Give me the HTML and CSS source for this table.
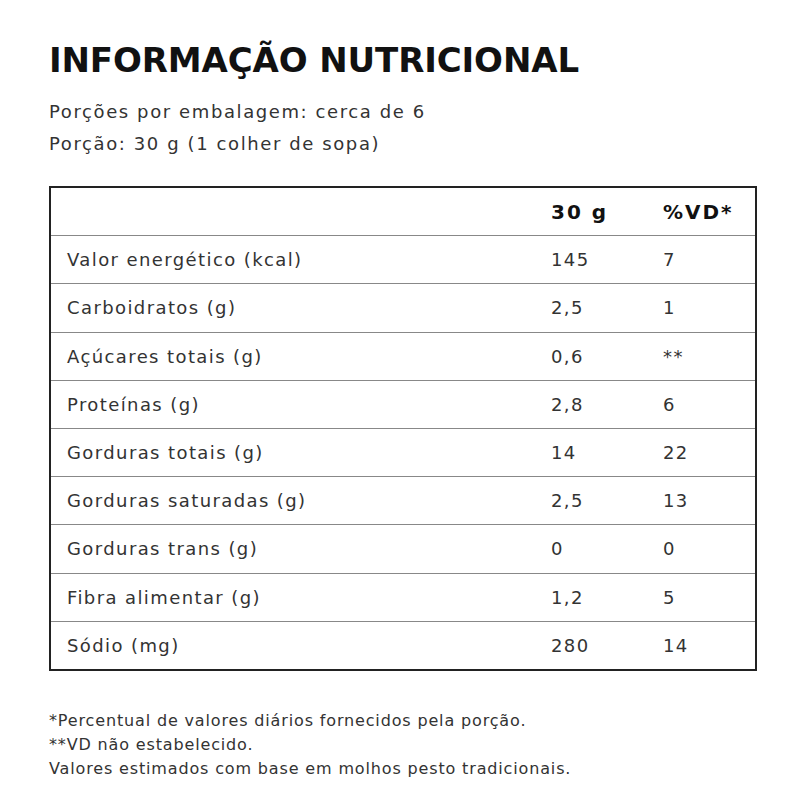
FILE: index.html
```html
<!DOCTYPE html>
<html lang="pt">
<head>
<meta charset="utf-8">
<link rel="stylesheet" href="styles.css">
</head>
<body>
<main class="page">
  <h1 class="title">INFORMAÇÃO NUTRICIONAL</h1>
  <p class="meta">Porções por embalagem: cerca de 6</p>
  <p class="meta">Porção: 30 g (1 colher de sopa)</p>
  <table class="facts">
    <thead>
      <tr><th class="label"></th><th class="amt">30 g</th><th class="vd">%VD*</th></tr>
    </thead>
    <tbody>
      <tr><td class="label">Valor energético (kcal)</td><td>145</td><td>7</td></tr>
      <tr><td class="label">Carboidratos (g)</td><td>2,5</td><td>1</td></tr>
      <tr><td class="label">Açúcares totais (g)</td><td>0,6</td><td>**</td></tr>
      <tr><td class="label">Proteínas (g)</td><td>2,8</td><td>6</td></tr>
      <tr><td class="label">Gorduras totais (g)</td><td>14</td><td>22</td></tr>
      <tr><td class="label">Gorduras saturadas (g)</td><td>2,5</td><td>13</td></tr>
      <tr><td class="label">Gorduras trans (g)</td><td>0</td><td>0</td></tr>
      <tr><td class="label">Fibra alimentar (g)</td><td>1,2</td><td>5</td></tr>
      <tr><td class="label">Sódio (mg)</td><td>280</td><td>14</td></tr>
    </tbody>
  </table>
  <div class="notes">
    <p>*Percentual de valores diários fornecidos pela porção.</p>
    <p>**VD não estabelecido.</p>
    <p>Valores estimados com base em molhos pesto tradicionais.</p>
  </div>
</main>
</body>
</html>
```
FILE: styles.css
```css
html, body {
  margin: 0;
  padding: 0;
  background: #fff;
}
body {
  font-family: "DejaVu Sans", sans-serif;
  color: #222;
}
.page {
  padding: 38px 43px 0 49px;
}
.title {
  margin: 0 0 14px;
  font-size: 34px;
  font-weight: bold;
  letter-spacing: -0.12px;
  color: #111;
  line-height: 44px;
}
.meta {
  margin: 0;
  font-size: 18px;
  line-height: 32px;
  letter-spacing: 1.6px;
  color: #333;
}
.facts {
  margin-top: 26px;
  width: 708px;
  border-collapse: collapse;
  border: 2px solid #222;
  font-size: 18px;
  letter-spacing: 1.4px;
  color: #333;
}
.facts th, .facts td {
  height: 47.2px;
  padding: 0 0 0 16px;
  text-align: left;
  border-bottom: 1px solid #888;
  font-weight: normal;
}
.facts th {
  font-weight: bold;
  font-size: 20px;
  letter-spacing: 2px;
  color: #111;
}
.facts .label {
  width: 468px;
}
.facts .amt {
  width: 96px;
}
.notes {
  margin-top: 38px;
  font-size: 16px;
  line-height: 24px;
  letter-spacing: 0.85px;
  color: #333;
}
.notes p {
  margin: 0;
}
```
